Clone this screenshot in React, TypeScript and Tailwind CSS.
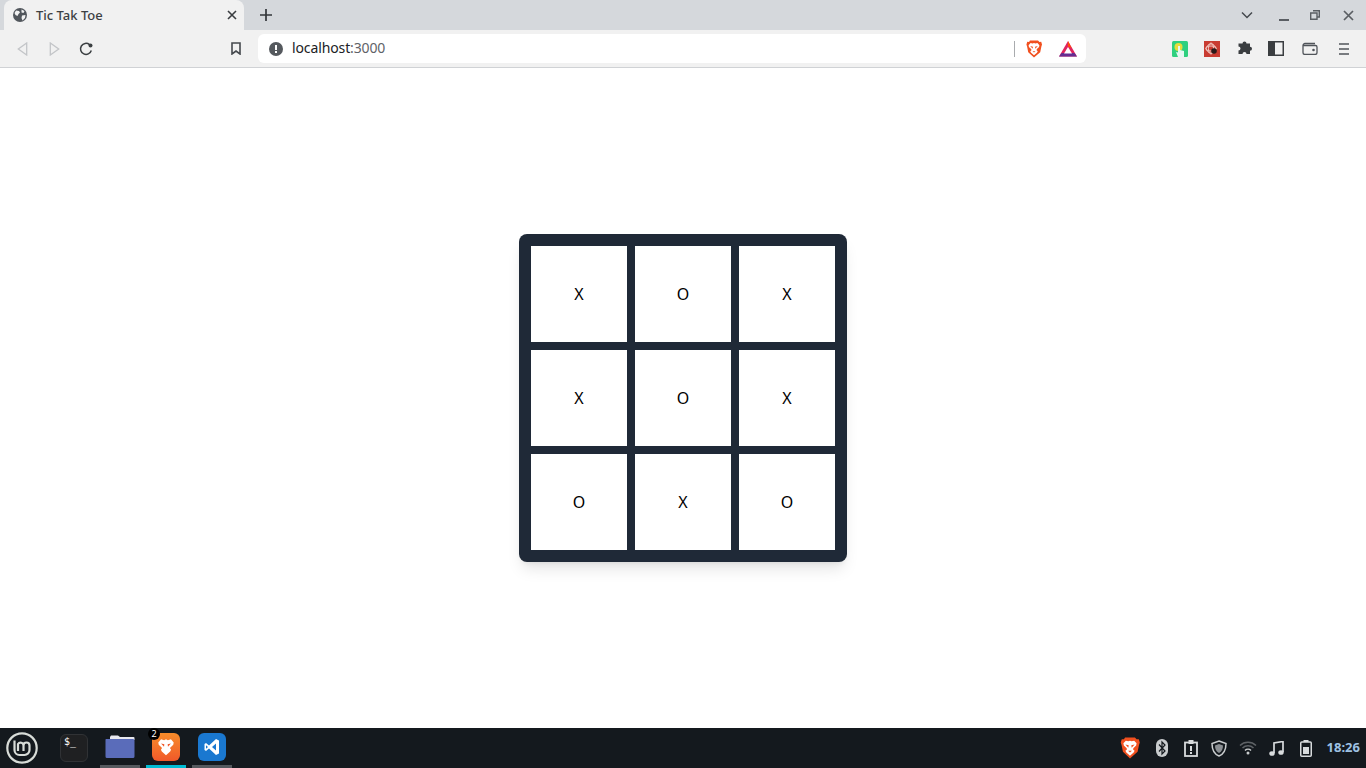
import React from 'react';

const board = ['X', 'O', 'X', 'X', 'O', 'X', 'O', 'X', 'O'];

const BraveLion = ({size = 20}: {size?: number}) => (
    <svg width={size} height={size} viewBox="0 0 20 20">
        <path d="M5.500.5h9l1.500 1.600 2-.1.900 3-.7 2.200-1.300 6.300L10 19.500l-6.400-6-1.300-6.300-.7-2.200.9-3 2 .1z" fill="#f1501f"/>
        <path d="M6.200 3.300l2.300.6 1.500-.6 1.500.6 2.300-.6 2.200 2.400-.4 2-2.600 2.600-.1 1.200 1.300 1-.9 1.700L10 17l-3.300-2.800-.9-1.700 1.300-1-.1-1.200-2.600-2.600-.4-2z" fill="#fff"/>
        <path d="M5.800 6.800l3 .7-.3 2.200zM14.200 6.800l-3 .7.3 2.200z" fill="#f1501f"/>
        <path d="M8.300 12.500h3.400L10 14z" fill="#f1501f"/>
    </svg>
);

const App: React.FC = () => {
    return (
        <div className="h-screen w-full flex flex-col bg-white overflow-hidden font-['Noto_Sans',sans-serif]">
            {/* Tab strip */}
            <div className="h-[30px] shrink-0 flex items-stretch bg-[#d5d8dc] pl-1">
                <div className="w-[240px] flex items-center bg-[#f1f1f1] rounded-t-lg pl-[9px] pr-[6px]">
                    <svg width="14" height="14" viewBox="0 0 14 14">
                        <circle cx="7" cy="7" r="7" fill="#51565c"/>
                        <path d="M3 2.500l3 .5 1 1.500-1.500 1.500-1 2L2.500 7 1.500 5zM8.500 1.500l3 1.500-1 2-2-.5zM9 7.500l3.500-.5-.5 3-2.500 2.500-1-2.500z" fill="#f1f1f1"/>
                    </svg>
                    <span className="ml-[9px] flex-1 pt-px text-[13px] font-medium text-[#3c4043]">Tic Tak Toe</span>
                    <svg width="10" height="10" viewBox="0 0 10 10" className="mr-px">
                        <path d="M1 1l8 8M9 1l-8 8" stroke="#3a3d40" strokeWidth="1.600"/>
                    </svg>
                </div>
                <div className="w-11 flex items-center justify-center">
                    <svg width="12" height="12" viewBox="0 0 12 12">
                        <path d="M6 0v12M0 6h12" stroke="#33363a" strokeWidth="1.700"/>
                    </svg>
                </div>
                <div className="flex-1 flex items-center justify-end">
                    <div className="w-8 flex justify-center mr-[4px]">
                        <svg width="12" height="8" viewBox="0 0 12 8">
                            <path d="M1 1.500l5 5 5-5" fill="none" stroke="#45494e" strokeWidth="1.500"/>
                        </svg>
                    </div>
                    <div className="w-8 flex justify-center pt-[9px] pl-[2px]">
                        <div className="w-[10px] h-[2px] bg-[#5a5e63]"/>
                    </div>
                    <div className="w-8 mr-px flex justify-center">
                        <svg width="10" height="10" viewBox="0 0 10 10">
                            <path d="M3 .7h6.300V7H7M.7 3H7v6.300H.7z" fill="none" stroke="#5a5e63" strokeWidth="1.400"/>
                        </svg>
                    </div>
                    <div className="w-8 mr-[2px] flex justify-center">
                        <svg width="11" height="11" viewBox="0 0 11 11">
                            <path d="M1 1l9 9M10 1l-9 9" stroke="#5a5e63" strokeWidth="1.700"/>
                        </svg>
                    </div>
                </div>
            </div>

            {/* Toolbar */}
            <div className="h-[38px] shrink-0 flex items-center bg-[#f1f1f1] border-b border-[#d0d2d5] pl-[6px]">
                <div className="w-8 flex justify-center">
                    <svg width="11" height="14" viewBox="0 0 11 14">
                        <path d="M9.700 1v12L1.300 7z" fill="none" stroke="#c3c5c8" strokeWidth="1.300"/>
                    </svg>
                </div>
                <div className="w-8 flex justify-center">
                    <svg width="11" height="14" viewBox="0 0 11 14">
                        <path d="M1.300 1v12l8.400-6z" fill="none" stroke="#c3c5c8" strokeWidth="1.300"/>
                    </svg>
                </div>
                <div className="w-8 flex justify-center">
                    <svg width="14" height="14" viewBox="0 0 14 14">
                        <path d="M12.300 8.500A5.500 5.500 0 1 1 10.500 2.600" fill="none" stroke="#3c4043" strokeWidth="1.500"/>
                        <circle cx="11.500" cy="3.500" r="2" fill="#3c4043"/>
                    </svg>
                </div>
                <div className="w-8 ml-[118px] flex justify-center">
                    <svg width="10" height="13" viewBox="0 0 10 13">
                        <path d="M1 1h8v11L5 9l-4 3z" fill="none" stroke="#45494e" strokeWidth="1.600"/>
                    </svg>
                </div>
                <div className="ml-[6px] w-[828px] h-[29px] bg-white rounded-md flex items-center pl-[11px]">
                    <svg width="14" height="14" viewBox="0 0 14 14">
                        <circle cx="7" cy="7" r="7" fill="#55595e"/>
                        <rect x="6" y="3" width="2" height="5" fill="#fff"/>
                        <rect x="6" y="9" width="2" height="2" fill="#fff"/>
                    </svg>
                    <span className="ml-[9px] pb-[2px] text-[14px] tracking-[-0.12px] text-[#202124]">
                        localhost<span className="text-[#5f6368]">:3000</span>
                    </span>
                    <div className="ml-auto w-px h-4 bg-[#a9abae]"/>
                    <div className="w-[38px] mr-px flex justify-center">
                        <BraveLion size={18}/>
                    </div>
                    <div className="w-[28px] mr-[4px] flex justify-center">
                        <svg width="18" height="16" viewBox="0 0 18 16">
                            <path d="M9 0l9 15.500H0z" fill="#e0245e"/>
                            <path d="M0 15.500h18L15.500 12h-13z" fill="#662d91"/>
                            <path d="M9 0l3.500 7L9 5.500z" fill="#ff5000"/>
                            <path d="M9 6l4 6.500H5z" fill="#fff"/>
                        </svg>
                    </div>
                </div>
                <div className="ml-[78px] w-8 flex justify-center">
                    <svg width="16" height="16" viewBox="0 0 16 16">
                        <rect width="16" height="16" rx="1.500" fill="#2fd07f"/>
                        <circle cx="6.500" cy="6" r="4" fill="#e8dc3c"/>
                        <path d="M6 5h2v4l4 1v6H6L4 11l2 .5z" fill="#e6f7f2"/>
                    </svg>
                </div>
                <div className="w-8 flex justify-center">
                    <svg width="16" height="16" viewBox="0 0 16 16">
                        <rect width="16" height="16" fill="#c93c32"/>
                        <ellipse cx="7" cy="7.500" rx="5.500" ry="2.500" fill="none" stroke="#f3c9c3"/>
                        <ellipse cx="7" cy="7.500" rx="2.500" ry="5.500" fill="none" stroke="#f3c9c3"/>
                        <circle cx="7" cy="7.500" r="4.500" fill="none" stroke="#f3c9c3"/>
                        <circle cx="10" cy="10" r="2.800" fill="#2a1a1a"/>
                    </svg>
                </div>
                <div className="w-8 flex justify-center">
                    <svg width="15" height="15" viewBox="0 0 15 15">
                        <path d="M5.500 2.500a2 2 0 0 1 4 0H13v3.200a2 2 0 0 1 0 4V13H9.500a2 2 0 0 0-4 0H1.500V9.500a2 2 0 0 0 0-4V2.500z" fill="#3a3d40"/>
                    </svg>
                </div>
                <div className="w-8 flex justify-center">
                    <svg width="16" height="15" viewBox="0 0 16 15">
                        <rect x=".75" y=".75" width="14.500" height="13.500" fill="none" stroke="#3a3d40" strokeWidth="1.500"/>
                        <rect x="1" y="1" width="6" height="13" fill="#3a3d40"/>
                    </svg>
                </div>
                <div className="ml-[2px] w-8 flex justify-center">
                    <svg width="16" height="13" viewBox="0 0 16 13">
                        <path d="M13 1.500H3A2 2 0 0 0 1 3.500v7a2 2 0 0 0 2 2h10a2 2 0 0 0 2-2V5a1.500 1.500 0 0 0-1.500-1.500H1.500" fill="none" stroke="#50545a" strokeWidth="1.300"/>
                        <circle cx="11.500" cy="8" r="1.300" fill="#50545a"/>
                    </svg>
                </div>
                <div className="ml-[2px] w-8 flex justify-center">
                    <svg width="10" height="12" viewBox="0 0 10 12">
                        <path d="M0 1h10M0 6h10M0 11h10" stroke="#50545a" strokeWidth="1.500"/>
                    </svg>
                </div>
            </div>

            {/* Page */}
            <div className="flex-1 flex items-center justify-center">
                <div className="grid grid-cols-3 gap-2 p-3 bg-[#1f2937] rounded-lg shadow-lg">
                    {board.map((mark, i) => (
                        <div key={i} className="w-24 h-24 bg-white flex items-center justify-center text-base text-black">
                            {mark}
                        </div>
                    ))}
                </div>
            </div>

            {/* Taskbar */}
            <div className="h-10 shrink-0 flex items-stretch bg-[#14191e]">
                <div className="w-[45px] pl-[6px] flex items-center">
                    <svg width="32" height="32" viewBox="0 0 32 32">
                        <circle cx="16" cy="16" r="14.700" fill="none" stroke="#d8dcd8" strokeWidth="2.200"/>
                        <path d="M8.500 8.500V18a5 5 0 0 0 5 5h5a5 5 0 0 0 5-5v-4.500a3 3 0 0 0-6 0V19M17.500 13.500a3 3 0 0 0-5.500-1.500V19" fill="none" stroke="#d8dcd8" strokeWidth="2.200"/>
                    </svg>
                </div>
                <div className="w-[55px] pl-[15px] flex items-center">
                    <div className="w-7 h-7 rounded-md bg-[#1f2022] border border-[#303235] pl-[3px] text-[10px] leading-[13px] text-white font-['DejaVu_Sans_Mono',monospace]">
                        $_
                    </div>
                </div>
                <div className="w-[40px] mr-[6px] flex items-center justify-center border-b-[3px] border-[#55595e]">
                    <svg width="30" height="25" viewBox="0 0 30 25">
                        <path d="M5 3l1-1.500h7L15 3h13.500a1 1 0 0 1 1 1v2H5z" fill="#e8e8ee"/>
                        <path d="M1 5h27a1.500 1.500 0 0 1 1.500 1.500v16A1.500 1.500 0 0 1 28 24H2a1.500 1.500 0 0 1-1.500-1.500V5.500z" fill="#5a6cba"/>
                    </svg>
                </div>
                <div className="w-[40px] mr-[6px] flex items-center justify-center border-b-[3px] border-[#00bcd4] relative">
                    <div className="w-7 h-7 rounded-md bg-gradient-to-b from-[#f78c2a] to-[#f0582a] flex items-center justify-center">
                        <svg width="22" height="22" viewBox="0 0 20 20">
                            <path d="M5.500 3l2.800.8L10 3l1.700.8L14.500 3 17 6l-.4 2-3 3 1 1.500-.8 1.500L10 17.500 6.200 14l-.8-1.500 1-1.500-3-3L3 6z" fill="#fff"/>
                            <path d="M5.500 6.800l3 .8-.3 2.200zM14.500 6.800l-3 .8.3 2.200z" fill="#f0582a"/>
                        </svg>
                    </div>
                    <div className="absolute left-[2px] top-0 w-[12px] h-[12px] rounded-full bg-black text-white text-[9px] leading-[12px] text-center">
                        2
                    </div>
                </div>
                <div className="w-[40px] flex items-center justify-center border-b-[3px] border-[#55595e]">
                    <div className="w-7 h-7 rounded-md bg-[#1a78d0] flex items-center justify-center">
                        <svg width="18" height="18" viewBox="0 0 18 18">
                            <path d="M13 1l3 1.500v13L13 17 6 10.500 3 13l-1.500-1V6L3 5l3 2.500zM13 5.500L9 9l4 3.500zM3 7.200v3.600L5 9z" fill="#fff"/>
                        </svg>
                    </div>
                </div>
                <div className="flex-1 flex items-center justify-end pr-[6px]">
                    <div className="w-[22px] flex justify-center mr-[7px]">
                        <BraveLion size={22}/>
                    </div>
                    <div className="w-[28px] flex justify-center mr-px">
                        <svg width="12" height="18" viewBox="0 0 12 18">
                            <rect width="12" height="18" rx="6" fill="#c9ccce"/>
                            <path d="M3 5.500l6 6.500-3 3V3l3 3-6 6.500" fill="none" stroke="#14191e" strokeWidth="1.200"/>
                        </svg>
                    </div>
                    <div className="w-[28px] flex justify-center">
                        <svg width="14" height="17" viewBox="0 0 14 17">
                            <rect x="1" y="2.500" width="12" height="13.500" fill="none" stroke="#d8dbdd" strokeWidth="1.800"/>
                            <rect x="4.500" y="0" width="5" height="4" fill="#d8dbdd"/>
                            <rect x="6" y="6" width="2" height="5" fill="#d8dbdd"/>
                            <rect x="6" y="12" width="2" height="2" fill="#d8dbdd"/>
                        </svg>
                    </div>
                    <div className="w-[29px] flex justify-center">
                        <svg width="16" height="17" viewBox="0 0 16 17">
                            <path d="M8 1l7 2.500c0 6-2 10.500-7 12.500C3 14 1 9.500 1 3.500z" fill="none" stroke="#c9ccce" strokeWidth="1.500"/>
                            <path d="M8 4l4 1.500c0 3.500-1.200 6-4 7.500-2.800-1.500-4-4-4-7.500z" fill="#8b8f93"/>
                        </svg>
                    </div>
                    <div className="w-[29px] flex justify-center">
                        <svg width="18" height="14" viewBox="0 0 18 14">
                            <path d="M1 4.500a11.500 11.500 0 0 1 16 0M3.500 7a8 8 0 0 1 11 0" fill="none" stroke="#5e6266" strokeWidth="1.500"/>
                            <path d="M6 9.500a4.300 4.300 0 0 1 6 0" fill="none" stroke="#c9ccce" strokeWidth="1.500"/>
                            <circle cx="9" cy="12" r="1.500" fill="#c9ccce"/>
                        </svg>
                    </div>
                    <div className="w-[28px] flex justify-center">
                        <svg width="15" height="15" viewBox="0 0 15 15">
                            <path d="M5 12V2l9-1.500V11" fill="none" stroke="#d8dbdd" strokeWidth="1.700"/>
                            <ellipse cx="3" cy="12.500" rx="2.700" ry="2.300" fill="#d8dbdd"/>
                            <ellipse cx="12" cy="11.500" rx="2.700" ry="2.300" fill="#d8dbdd"/>
                        </svg>
                    </div>
                    <div className="w-[30px] mr-px flex justify-center">
                        <svg width="12" height="17" viewBox="0 0 12 17">
                            <rect x="3.500" y="0" width="5" height="2" fill="#d8dbdd"/>
                            <rect x=".75" y="2" width="10.500" height="14.250" rx="1" fill="none" stroke="#d8dbdd" strokeWidth="1.500"/>
                            <rect x="3" y="7" width="6" height="7" fill="#d8dbdd"/>
                        </svg>
                    </div>
                    <span className="ml-[5px] text-[13px] font-bold text-[#9ec1e3]">18:26</span>
                </div>
            </div>
        </div>
    );
};

export default App;
